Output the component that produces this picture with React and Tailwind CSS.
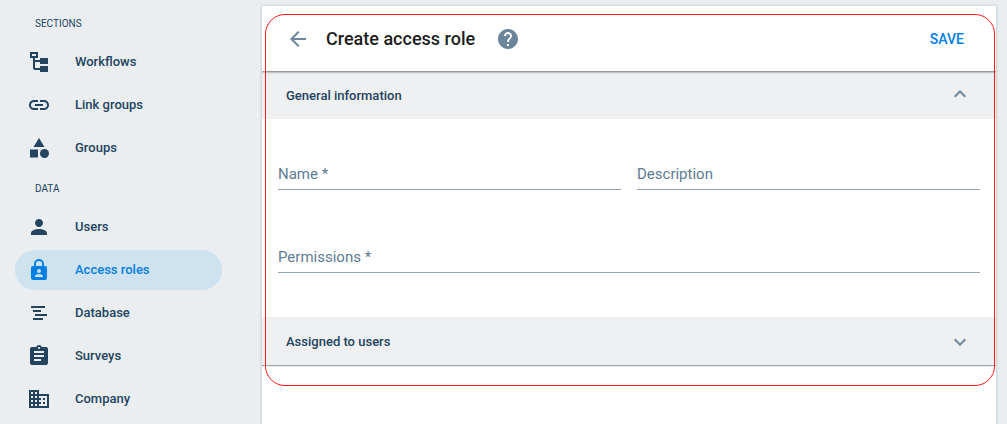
import React from "react";
import { MdLink, MdCategory, MdPerson, MdAssignment, MdBusiness, MdArrowBack, MdHelp, MdExpandLess, MdExpandMore } from "react-icons/md";

function TreeIcon() {
  return (
    <svg width="24" height="24" viewBox="0 0 24 24" fill="currentColor">
      <path fillRule="evenodd" d="M3 2h8v6H8v2h5V8h8v6h-8v-2H8v6h5v-2h8v6h-8v-2H8a2 2 0 0 1-2-2V8H3zM5 4v2h4V4z" />
    </svg>
  );
}

function LockPersonIcon() {
  return (
    <svg width="24" height="24" viewBox="0 0 24 24" fill="currentColor">
      <path fillRule="evenodd" d="M12 1a5 5 0 0 0-5 5v2H6a2 2 0 0 0-2 2v10a2 2 0 0 0 2 2h12a2 2 0 0 0 2-2V10a2 2 0 0 0-2-2h-1V6a5 5 0 0 0-5-5zm0 1.900A3.100 3.100 0 0 1 15.100 6v2H8.900V6A3.100 3.100 0 0 1 12 2.900zM12 11a2 2 0 1 1 0 4 2 2 0 0 1 0-4zm4 8H8v-1c0-1.330 2.670-2 4-2s4 .67 4 2z" />
    </svg>
  );
}

function BarsIcon() {
  return (
    <svg width="24" height="24" viewBox="0 0 24 24" fill="currentColor">
      <path d="M4 5h14v2H4zM6 9h8v2H6zM8 13h12v2H8zM6 17h10v2H6z" />
    </svg>
  );
}

function NavItem({ icon, label, active }) {
  return (
    <a className={active
      ? "flex h-10 w-[207px] items-center rounded-full bg-[#cfe2f0] pl-3 text-[#0080e6]"
      : "flex h-10 w-[207px] items-center rounded-full pl-3 text-[#23435e]"}>
      {icon}
      <span className="ml-6 text-[13px] leading-4 font-medium">{label}</span>
    </a>
  );
}

function Field({ label }) {
  return (
    <label className="flex h-8 flex-1 items-start border-b border-[#90a4b3] text-[15px] leading-8 text-[#5e7b91]">
      {label}
    </label>
  );
}

export default function App() {
  return (
    <div className="relative flex h-[424px] w-[1007px] overflow-hidden bg-[#eaeef1] font-['Roboto',sans-serif]">
      <nav className="w-[262px] shrink-0 pl-[15px]">
        <h2 className="mt-[18px] pl-5 text-[10px] leading-3 text-[#23435e]">SECTIONS</h2>
        <div className="mt-3 flex flex-col gap-[3px]">
          <NavItem icon={<TreeIcon />} label="Workflows" />
          <NavItem icon={<MdLink size={24} />} label="Link groups" />
          <NavItem icon={<MdCategory size={24} />} label="Groups" />
        </div>
        <h2 className="mt-[15px] pl-5 text-[10px] leading-3 text-[#23435e]">DATA</h2>
        <div className="mt-3 flex flex-col gap-[3px]">
          <NavItem icon={<MdPerson size={24} />} label="Users" />
          <NavItem icon={<LockPersonIcon />} label="Access roles" active />
          <NavItem icon={<BarsIcon />} label="Database" />
          <NavItem icon={<MdAssignment size={24} />} label="Surveys" />
          <NavItem icon={<MdBusiness size={24} />} label="Company" />
        </div>
      </nav>
      <main className="mt-[6px] h-[430px] w-[734px] shrink-0 bg-white shadow-[0_0_3px_rgba(35,67,94,0.3)]">
        <header className="relative flex h-[65px] items-center pr-8 pl-6 shadow-[0_1px_2px_rgba(0,0,0,0.55)] [clip-path:inset(0_0_-4px_0)]">
          <MdArrowBack size={24} className="text-[#6c8599]" />
          <h1 className="ml-4 text-[18px] leading-6 font-medium text-[#1d1d1d]">Create access role</h1>
          <MdHelp size={24} className="ml-[21px] text-[#6c8599]" />
          <button className="ml-auto pt-px text-[14px] leading-5 font-medium text-[#0080e6]">SAVE</button>
        </header>
        <div className="flex h-12 items-center justify-between bg-[#eff0f2] pr-6 pl-6 text-[#23435e]">
          <h3 className="pt-0.5 text-[13px] leading-4 font-medium">General information</h3>
          <MdExpandLess size={24} className="mb-0.5 text-[#6c8599]" />
        </div>
        <div className="flex h-[198px] flex-col gap-[51px] px-4 pt-[39px]">
          <div className="flex gap-4">
            <Field label="Name *" />
            <Field label="Description" />
          </div>
          <div className="flex">
            <Field label="Permissions *" />
          </div>
        </div>
        <div className="flex h-12 items-center justify-between bg-[#eff0f2] pt-0.5 pr-6 pl-6 text-[#23435e] shadow-[0_1px_1px_#90a4b3] [clip-path:inset(0_0_-4px_0)]">
          <h3 className="text-[13px] leading-4 font-medium">Assigned to users</h3>
          <MdExpandMore size={24} className="text-[#6c8599]" />
        </div>
      </main>
      <div className="pointer-events-none absolute top-[14px] left-[265px] h-[372px] w-[730px] rounded-[20px] border border-[#ff1a1a]" />
    </div>
  );
}
